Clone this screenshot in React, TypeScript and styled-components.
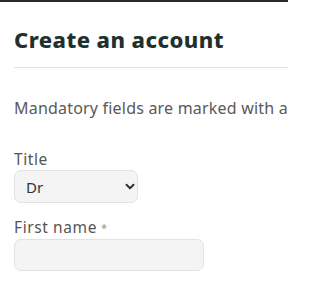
import styled, { createGlobalStyle } from "styled-components";

const Global = createGlobalStyle`
  html, body { margin: 0; padding: 0; background: #fff; overflow: hidden; }
  body { font-family: "Noto Sans", "Open Sans", sans-serif; }
`;

const Frame = styled.div`
  width: 288px;
  overflow: hidden;
`;

const TopBar = styled.div`
  height: 2px;
  background: #2a2a2a;
`;

const Page = styled.main`
  padding: 22px 0 0 14px;
  overflow: hidden;
`;

const Heading = styled.h1`
  margin: 0;
  font-size: 22px;
  font-weight: 800;
  letter-spacing: 0.45px;
  color: #22302c;
  line-height: 30px;
  white-space: nowrap;
`;

const Divider = styled.hr`
  margin: 13px 0 0;
  border: 0;
  border-top: 1px solid #f1e3c8;
`;

const Note = styled.p`
  margin: 30px 0 0;
  font-size: 16px;
  letter-spacing: 0.2px;
  color: #595959;
  white-space: nowrap;
  line-height: 20px;
`;

const Field = styled.div<{ $top: number }>`
  display: flex;
  flex-direction: column;
  align-items: flex-start;
  gap: 1px;
  margin-top: ${(p) => p.$top}px;
`;

const Label = styled.label`
  font-size: 15.5px;
  letter-spacing: 0.6px;
  color: #555;
  line-height: 20px;
`;

const Star = styled.span`
  color: #8f9c74;
  font-size: 11px;
  margin-left: 4px;
  vertical-align: 1px;
`;

const SelectBox = styled.div`
  box-sizing: border-box;
  width: 124px;
  height: 33px;
  border: 1px solid #e2e2e2;
  border-radius: 7px;
  background: #f4f4f4;
  display: flex;
  align-items: center;
  padding: 0 2px 0 11px;
  justify-content: space-between;
  font-size: 15px;
  color: #333;
`;

const Input = styled.div`
  box-sizing: border-box;
  width: 190px;
  height: 32px;
  border: 1px solid #e2e2e2;
  border-radius: 7px;
  background: #f4f4f4;
`;

export default function App() {
  return (
    <Frame>
      <Global />
      <TopBar />
      <Page>
        <Heading>Create an account</Heading>
        <Divider />
        <Note>Mandatory fields are marked with an asterisk</Note>
        <Field $top={31}>
          <Label>Title</Label>
          <SelectBox>
            <span>Dr</span>
            <svg width="10" height="7" viewBox="0 0 10 7">
              <path d="M1.5 1.8 L5 5.2 L8.5 1.8" fill="none" stroke="#333" strokeWidth="2" strokeLinecap="round" strokeLinejoin="round" />
            </svg>
          </SelectBox>
        </Field>
        <Field $top={14}>
          <Label>
            First name<Star>*</Star>
          </Label>
          <Input />
        </Field>
      </Page>
    </Frame>
  );
}
